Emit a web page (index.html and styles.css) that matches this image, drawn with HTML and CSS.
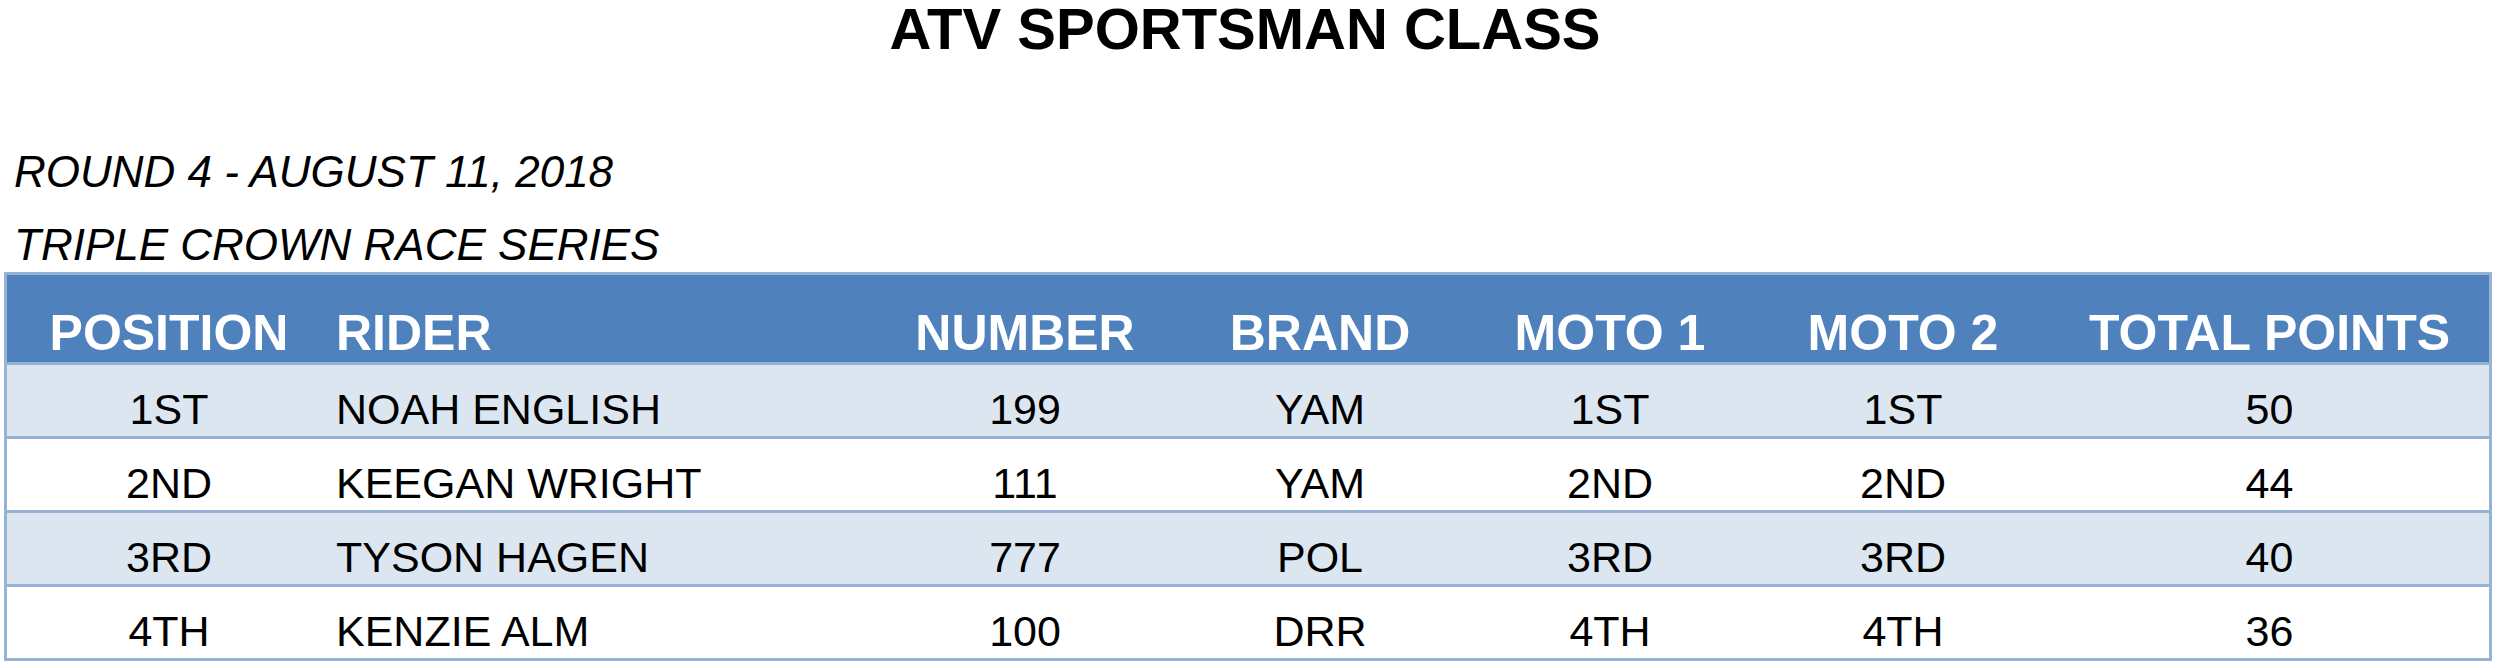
FILE: index.html
```html
<!DOCTYPE html>
<html>
<head>
<meta charset="utf-8">
<title>ATV Sportsman Class</title>
<link rel="stylesheet" href="styles.css">
</head>
<body>
<div class="page">
  <h1 class="title">ATV SPORTSMAN CLASS</h1>
  <p class="sub sub-first">ROUND 4 - AUGUST 11, 2018</p>
  <p class="sub sub-second">TRIPLE CROWN RACE SERIES</p>
  <div class="table">
    <div class="row head">
      <div class="cell">POSITION</div>
      <div class="cell left">RIDER</div>
      <div class="cell">NUMBER</div>
      <div class="cell">BRAND</div>
      <div class="cell">MOTO 1</div>
      <div class="cell">MOTO 2</div>
      <div class="cell">TOTAL POINTS</div>
    </div>
    <div class="row body odd">
      <div class="cell">1ST</div>
      <div class="cell left">NOAH ENGLISH</div>
      <div class="cell">199</div>
      <div class="cell">YAM</div>
      <div class="cell">1ST</div>
      <div class="cell">1ST</div>
      <div class="cell">50</div>
    </div>
    <div class="row body">
      <div class="cell">2ND</div>
      <div class="cell left">KEEGAN WRIGHT</div>
      <div class="cell">111</div>
      <div class="cell">YAM</div>
      <div class="cell">2ND</div>
      <div class="cell">2ND</div>
      <div class="cell">44</div>
    </div>
    <div class="row body odd">
      <div class="cell">3RD</div>
      <div class="cell left">TYSON HAGEN</div>
      <div class="cell">777</div>
      <div class="cell">POL</div>
      <div class="cell">3RD</div>
      <div class="cell">3RD</div>
      <div class="cell">40</div>
    </div>
    <div class="row body">
      <div class="cell">4TH</div>
      <div class="cell left">KENZIE ALM</div>
      <div class="cell">100</div>
      <div class="cell">DRR</div>
      <div class="cell">4TH</div>
      <div class="cell">4TH</div>
      <div class="cell">36</div>
    </div>
  </div>
</div>
</body>
</html>
```

FILE: styles.css
```css
html, body {
  margin: 0;
  padding: 0;
  background: #ffffff;
}

.page {
  width: 2500px;
  font-family: "Liberation Sans", Arial, sans-serif;
  color: #000;
}

.title {
  margin: 0;
  padding-right: 10px;
  font-size: 58px;
  line-height: 58px;
  font-weight: 700;
  text-align: center;
}

.sub {
  margin: 0;
  padding-left: 14px;
  font-size: 44px;
  line-height: 48px;
  font-style: italic;
}

.sub-first {
  margin-top: 90px;
}

.sub-second {
  margin-top: 25px;
}

.table {
  margin: 3px 0 0 4px;
  width: 2488px;
  box-sizing: border-box;
  border: 3px solid #95b3d7;
}

.row {
  display: grid;
  grid-template-columns: 324px 543px 302px 288px 292px 294px 439px;
  align-items: end;
}

.cell {
  text-align: center;
  white-space: nowrap;
}

.cell.left {
  text-align: left;
  padding-left: 5px;
}

.head {
  height: 87px;
  background: #4f81bd;
  color: #ffffff;
  font-size: 50px;
  font-weight: 700;
  line-height: 55px;
  padding-bottom: 1px;
  box-sizing: border-box;
}

.body {
  height: 74px;
  border-top: 3px solid #95b3d7;
  box-sizing: border-box;
  background: #ffffff;
  font-size: 43px;
  line-height: 48px;
  padding-bottom: 3px;
}

.body.odd {
  background: #dce6f1;
}
```
